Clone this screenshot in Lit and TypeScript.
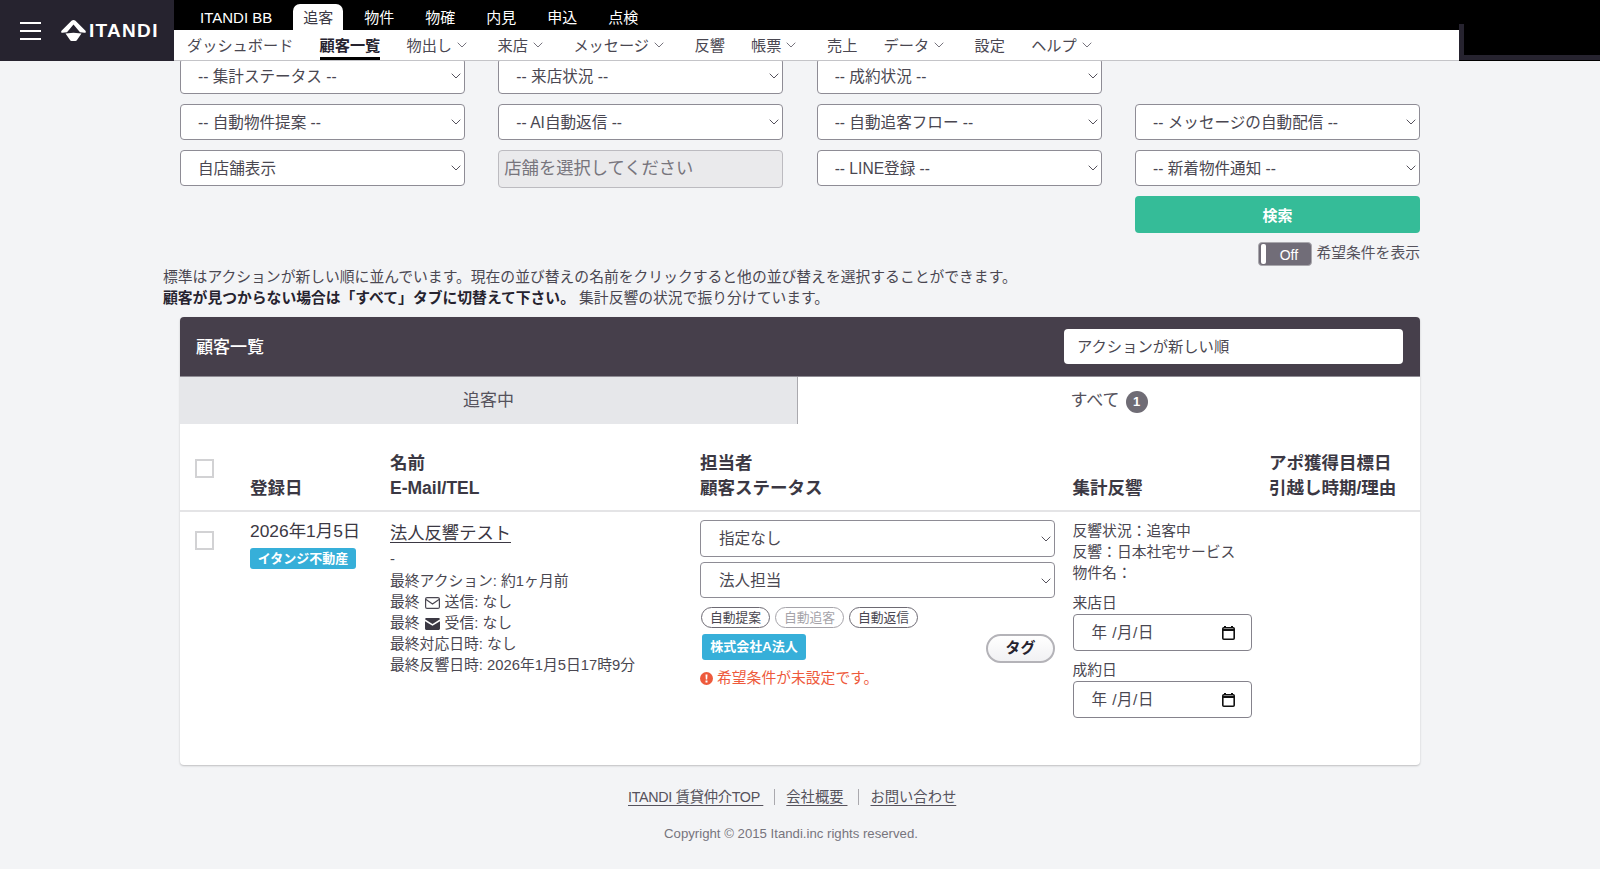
import { LitElement, html, css, svg } from 'lit';
import { customElement } from 'lit/decorators.js';

const chevron = svg`<svg class="chev" width="10" height="6" viewBox="0 0 10 6"><path d="M.7.7 5 5l4.3-4.3" fill="none" stroke="currentColor" stroke-width="1"/></svg>`;

const topTabs = ['物件', '物確', '内見', '申込', '点検'];

const subNav: { label: string; menu?: boolean; active?: boolean }[] = [
  { label: 'ダッシュボード' },
  { label: '顧客一覧', active: true },
  { label: '物出し', menu: true },
  { label: '来店', menu: true },
  { label: 'メッセージ', menu: true },
  { label: '反響' },
  { label: '帳票', menu: true },
  { label: '売上' },
  { label: 'データ', menu: true },
  { label: '設定' },
  { label: 'ヘルプ', menu: true },
];

@customElement('app-root')
export class AppRoot extends LitElement {
  static styles = css`
    :host {
      display: block;
      min-height: 869px;
      background: #f3f4f6;
      color: #3b3843;
      font-family: "Liberation Sans", "Noto Sans CJK JP", sans-serif;
      font-size: 14px;
    }
    * { box-sizing: border-box; }

    header {
      position: relative;
      z-index: 2;
      display: flex;
      height: 61px;
      background: #000;
    }
    .brand {
      width: 174px;
      flex: none;
      display: flex;
      align-items: center;
      background: #26232f;
      color: #fff;
      padding-left: 20px;
    }
    .burger { width: 21px; display: flex; flex-direction: column; gap: 6px; margin-right: 20px; }
    .burger span { height: 2px; background: #fff; }
    .logo-text { font-size: 19px; font-weight: 700; letter-spacing: 1.3px; margin-left: 3px; padding-top: 1px; }
    .nav { width: 1285px; flex: none; display: flex; flex-direction: column; }
    .top { height: 30px; display: flex; align-items: flex-end; padding-left: 16px; gap: 11px; color: #fff; font-size: 15px; }
    .top span { height: 26px; line-height: 27px; padding: 0 10px; }
    .top .on { background: #fff; color: #3b3843; border-radius: 7px 7px 0 0; }
    .sub {
      height: 31px;
      display: flex;
      background: #fff;
      border-bottom: 1px solid #c4c4c8;
      padding-left: 13px;
      font-size: 15.2px;
      color: #4a4751;
    }
    .sub a { display: flex; align-items: center; gap: 5px; height: 30px; padding: 0 26.2px 3px 0; position: relative; white-space: nowrap; }
    .sub a.menu { padding-right: 30.5px; }
    .sub .chev { color: #77747e; margin-top: 3px; }
    .sub .on { font-weight: 700; color: #26232f; }
    .sub .on::after { content: ""; position: absolute; left: 0; right: 26.2px; bottom: 0; height: 3px; background: #000; }
    .corner { flex: 1; position: relative; }
    .corner::after {
      content: "";
      position: absolute;
      left: 0; right: 0; top: 24px; bottom: 1px;
      border-left: 5px solid #26232f;
      border-bottom: 5px solid #26232f;
    }

    main { width: 1240px; margin: -3px 0 0 180px; }
    .filters { display: grid; grid-template-columns: repeat(4, 285px); column-gap: 33.33px; row-gap: 10px; grid-auto-rows: 36px; }
    .sel { position: relative; display: block; height: 36px; }
    .sel select {
      appearance: none;
      width: 100%;
      height: 100%;
      background: #fff;
      border: 1px solid #8e8c95;
      border-radius: 4px;
      padding: 0 24px 0 17px;
      font: inherit;
      font-size: 15.6px;
      color: #4a4751;
    }
    .sel .chev { position: absolute; right: 4px; top: 15px; color: #55525c; pointer-events: none; }
    .store {
      background: #eaeaec;
      border: 1px solid #bcbbc0;
      border-radius: 4px;
      padding-left: 5px;
      line-height: 35px;
      height: 38px;
      font-size: 17.3px;
      color: #77757d;
    }
    .search-row { display: grid; grid-template-columns: 285px; justify-content: end; margin-top: 10px; }
    .search { height: 37px; border: 0; border-radius: 4px; background: #35bc98; color: #fff; font: inherit; font-size: 15px; font-weight: 700; }
    .toggle-row { display: flex; justify-content: flex-end; align-items: center; gap: 4px; margin-top: 9px; height: 24px; font-size: 14.8px; color: #55525c; }
    .toggle-row span { margin-top: -5px; }
    .toggle {
      width: 54px; height: 24px; padding: 0 2px; display: flex; align-items: stretch;
      background: #716d78; border: 1px solid #a9a8ad; border-radius: 4px; color: #fff; font-size: 14px;
    }
    .toggle i { width: 5px; background: #fff; border-radius: 2px; margin: 1px 0; }
    .toggle b { flex: 1; font-weight: 400; text-align: center; line-height: 24px; padding-left: 2px; }
    .note { margin: 0 0 0 -17px; padding-top: 1px; font-size: 14.8px; line-height: 21px; color: #4a4751; white-space: nowrap; height: 51px; }
    .note strong { color: #26232f; }

    .card { background: #fff; height: 448px; border-radius: 4px; box-shadow: 0 1px 2px rgba(0, 0, 0, .22); overflow: hidden; }
    .card-head {
      height: 60px; display: flex; align-items: center; justify-content: space-between;
      padding: 0 17px 0 16px; background: #463f4b; color: #fff; font-size: 17px; font-weight: 500;
      border-bottom: 1px solid #8f8c94;
    }
    .card-head > span { margin-top: -2px; }
    .sort { width: 339px; height: 35px; background: #fff; border-radius: 4px; color: #4a4751; font-size: 15.3px; font-weight: 400; line-height: 35px; padding-left: 13px; }
    .tabs { display: grid; grid-template-columns: 618px 1fr; height: 47px; font-size: 17px; text-align: center; line-height: 47px; color: #55525c; }
    .tabs .off { background: #e6e7ea; border-right: 1px solid #aaa9ae; }
    .tabs .all { display: flex; justify-content: center; align-items: center; gap: 6px; }
    .tabs .all span:first-child { margin-top: -1px; }
    .count { width: 22px; height: 22px; border-radius: 50%; background: #6f6c75; color: #fff; font-size: 13px; font-weight: 700; line-height: 22px; margin-top: 2px; }

    .row { display: grid; grid-template-columns: 55px 140px 310px 372.5px 196.5px 1fr; padding-left: 15px; }
    .thead { height: 88px; border-bottom: 2px solid #e4e4e6; align-items: end; padding-bottom: 9px; font-size: 17.5px; font-weight: 700; line-height: 25px; color: #3b3843; }
    .check { display: block; width: 19px; height: 19px; background: #fff; border: 2px solid #d2d2d4; }
    .thead .check { align-self: start; margin-top: 35px; }
    .tbody { padding-top: 18px; font-size: 14.8px; line-height: 21px; color: #4a4751; }
    .tbody > .check { margin-top: 1px; }
    .date { display: flex; flex-direction: column; align-items: flex-start; margin-top: -9px; font-size: 17.4px; color: #3b3843; white-space: nowrap; }
    .blue { display: inline-block; background: #36afd9; color: #fff; font-weight: 700; border-radius: 3px; font-size: 13px; }
    .date .blue { width: 106px; height: 21px; line-height: 21px; text-align: center; margin-top: 6px; }
    .name { display: block; width: fit-content; font-size: 17.3px; line-height: 21px; margin-top: -7px; color: #3b3843; text-decoration: underline; text-underline-offset: 3px; }
    .dash { margin: 5px 0 1px; }
    .lines div { display: flex; align-items: center; white-space: pre; }
    .lines svg { margin: 0 5px; }
    .staff { width: 355px; margin-top: -10px; }
    .staff .sel { margin-bottom: 5px; height: 36px; }
    .staff .sel:first-child { height: 37px; }
    .staff .sel select { padding-left: 18px; }
    .staff .sel .chev { top: 16px; }
    .pills { display: flex; gap: 5px; margin: 9px 0 0 1px; }
    .pills span { width: 69px; height: 21px; border: 1px solid #6d6a73; border-radius: 11px; font-size: 12.8px; line-height: 19px; text-align: center; color: #4a4751; }
    .pills .dim { color: #a5a3a9; border-color: #a5a3a9; }
    .tag-row { display: flex; justify-content: space-between; align-items: center; margin-top: 4px; padding-left: 2px; height: 29px; }
    .tag-row .blue { width: 104px; height: 26px; line-height: 26px; text-align: center; }
    .tag-btn { width: 69px; height: 29px; margin-top: 4px; border: 2px solid #b4b3b8; border-radius: 15px; background: linear-gradient(#fff, #f1f1f3); font-size: 15px; font-weight: 700; text-align: center; line-height: 24px; color: #26232f; }
    .error { display: flex; align-items: center; gap: 4px; margin-top: 7px; color: #ee5a3c; font-size: 14.8px; }
    .reply { margin-top: -9px; }
    .reply .label { margin-top: 9px; line-height: 21px; }
    .date-box {
      width: 179px; height: 37px; display: flex; align-items: center; justify-content: space-between;
      padding: 0 16px 0 18px; background: #fff; border: 1px solid #85838c; border-radius: 4px; font-size: 15.5px; letter-spacing: .5px; color: #4a4751;
    }

    footer { text-align: center; color: #55525c; padding-top: 24px; }
    .links { display: flex; margin-left: 448px; font-size: 14.3px; line-height: 16px; white-space: pre; }
    .links a { text-decoration: underline; text-underline-offset: 3px; padding: 0 11px; border-left: 1px solid #aaa9ae; }
    .links a:first-child { border: 0; padding-left: 0; letter-spacing: -.3px; }
    .copy { margin: 21px 0 0; width: 1222px; font-size: 13.2px; color: #77757d; }
  `;

  private select(label: string) {
    return html`<label class="sel"><select><option>${label}</option></select>${chevron}</label>`;
  }

  private dateBox() {
    return html`<div class="date-box">
      <span>年 /月/日</span>
      <svg width="13" height="14" viewBox="0 0 13 14"><path d="M3 0v2M10 0v2" stroke="#111" stroke-width="2"/><rect x=".8" y="1.8" width="11.4" height="11.4" rx="1" fill="none" stroke="#111" stroke-width="1.6"/><path d="M1 3h11v2H1z" fill="#111"/></svg>
    </div>`;
  }

  render() {
    return html`
      <header>
        <div class="brand">
          <div class="burger"><span></span><span></span><span></span></div>
          <svg width="25" height="21" viewBox="0 0 25 21"><path fill="#fff" d="M10.5.8Q12.5-.6 14.5.8l10 10q1 2-1 2L19 12.200 12.500 4.500 6 12.200l-4.500.6q-2 0-1-2zM4.500 13.400 12.500 12.800 20.500 13.400 16 20q-.5 1-1.500 1h-4q-1 0-1.500-1z"/></svg>
          <span class="logo-text">ITANDI</span>
        </div>
        <div class="nav">
          <div class="top">
            <span>ITANDI BB</span>
            <span class="on">追客</span>
            ${topTabs.map((t) => html`<span>${t}</span>`)}
          </div>
          <nav class="sub">
            ${subNav.map(
              (n) => html`<a class="${n.active ? 'on' : ''} ${n.menu ? 'menu' : ''}">${n.label}${n.menu ? chevron : ''}</a>`
            )}
          </nav>
        </div>
        <div class="corner"></div>
      </header>

      <main>
        <div class="filters">
          ${this.select('-- 集計ステータス --')}
          ${this.select('-- 来店状況 --')}
          ${this.select('-- 成約状況 --')}
          <div></div>
          ${this.select('-- 自動物件提案 --')}
          ${this.select('-- AI自動返信 --')}
          ${this.select('-- 自動追客フロー --')}
          ${this.select('-- メッセージの自動配信 --')}
          ${this.select('自店舗表示')}
          <div class="store">店舗を選択してください</div>
          ${this.select('-- LINE登録 --')}
          ${this.select('-- 新着物件通知 --')}
        </div>
        <div class="search-row"><button class="search">検索</button></div>
        <div class="toggle-row">
          <div class="toggle"><i></i><b>Off</b></div>
          <span>希望条件を表示</span>
        </div>
        <p class="note">
          標準はアクションが新しい順に並んでいます。現在の並び替えの名前をクリックすると他の並び替えを選択することができます。<br />
          <strong>顧客が見つからない場合は「すべて」タブに切替えて下さい。</strong> 集計反響の状況で振り分けています。
        </p>

        <section class="card">
          <div class="card-head">
            <span>顧客一覧</span>
            <div class="sort">アクションが新しい順</div>
          </div>
          <div class="tabs">
            <div class="off">追客中</div>
            <div class="all"><span>すべて</span><span class="count">1</span></div>
          </div>
          <div class="row thead">
            <span class="check"></span>
            <div>登録日</div>
            <div>名前<br />E-Mail/TEL</div>
            <div>担当者<br />顧客ステータス</div>
            <div>集計反響</div>
            <div>アポ獲得目標日<br />引越し時期/理由</div>
          </div>
          <div class="row tbody">
            <span class="check"></span>
            <div class="date">
              <span>2026年1月5日</span>
              <span class="blue">イタンジ不動産</span>
            </div>
            <div class="lines">
              <a class="name">法人反響テスト</a>
              <div class="dash">-</div>
              <div>最終アクション: 約1ヶ月前</div>
              <div>最終<svg width="15" height="12" viewBox="0 0 15 12"><rect x=".6" y=".6" width="13.8" height="10.8" rx="1.5" fill="none" stroke="#4a4751" stroke-width="1.2"/><path d="m1 2.5 6.5 4.5L14 2.5" fill="none" stroke="#4a4751" stroke-width="1.2"/></svg>送信: なし</div>
              <div>最終<svg width="15" height="12" viewBox="0 0 15 12"><path fill="#3b3843" d="M1.5 0h12c.8 0 1.5.6 1.5 1.3L7.5 6 0 1.3C0 .6.7 0 1.5 0zM0 3.2l7.5 4.6L15 3.2v7.3c0 .8-.7 1.5-1.5 1.5h-12C.7 12 0 11.3 0 10.500z"/></svg>受信: なし</div>
              <div>最終対応日時: なし</div>
              <div>最終反響日時: 2026年1月5日17時9分</div>
            </div>
            <div class="staff">
              ${this.select('指定なし')}
              ${this.select('法人担当')}
              <div class="pills">
                <span>自動提案</span><span class="dim">自動追客</span><span>自動返信</span>
              </div>
              <div class="tag-row">
                <span class="blue">株式会社A法人</span>
                <span class="tag-btn">タグ</span>
              </div>
              <div class="error">
                <svg width="13" height="13" viewBox="0 0 13 13"><circle cx="6.5" cy="6.5" r="6.5" fill="#ee5a3c"/><path d="M5.5 2.5h2l-.3 5H5.8zM5.5 8.500h2v2h-2z" fill="#fff"/></svg>
                希望条件が未設定です。
              </div>
            </div>
            <div class="reply">
              <div>反響状況：追客中</div>
              <div>反響：日本社宅サービス</div>
              <div>物件名：</div>
              <div class="label">来店日</div>
              ${this.dateBox()}
              <div class="label">成約日</div>
              ${this.dateBox()}
            </div>
            <div></div>
          </div>
        </section>

        <footer>
          <div class="links"><a>ITANDI 賃貸仲介TOP </a><a>会社概要 </a><a>お問い合わせ</a></div>
          <p class="copy">Copyright © 2015 Itandi.inc rights reserved.</p>
        </footer>
      </main>
    `;
  }
}
